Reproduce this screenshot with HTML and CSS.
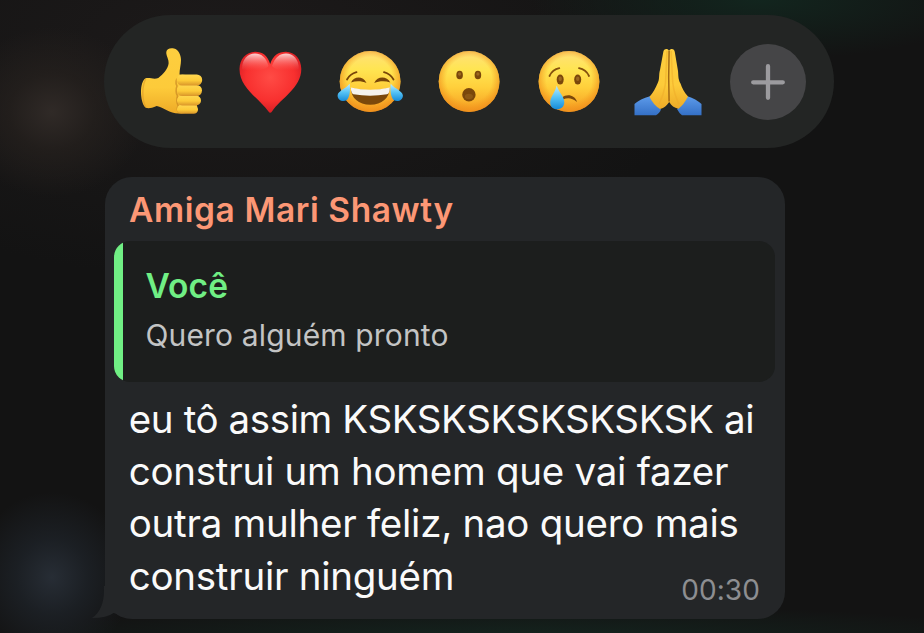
FILE: index.html
```html
<!DOCTYPE html>
<html lang="pt-BR">
<head>
<meta charset="utf-8">
<title>Reagir à mensagem</title>
<link rel="stylesheet" href="styles.css">
</head>
<body>
<svg class="defs" width="0" height="0" aria-hidden="true">
  <defs>
    <linearGradient id="face" x1="0" y1="0" x2="0" y2="1"><stop offset="0" stop-color="#ffe07a"/><stop offset=".3" stop-color="#ffe552"/><stop offset=".6" stop-color="#ffcf3b"/><stop offset="1" stop-color="#f59b20"/></linearGradient>
    <radialGradient id="rim" cx=".5" cy=".47" r=".53"><stop offset=".7" stop-color="#f4961c" stop-opacity="0"/><stop offset="1" stop-color="#ee8d1c" stop-opacity=".8"/></radialGradient>
    <linearGradient id="skin" x1="0" y1="0" x2="0" y2="1"><stop offset="0" stop-color="#fdce3f"/><stop offset=".6" stop-color="#fdcb3a"/><stop offset="1" stop-color="#eeaa27"/></linearGradient>
    <linearGradient id="finger" x1="0" y1="0" x2="0" y2="1"><stop offset="0" stop-color="#ffd750"/><stop offset=".55" stop-color="#fdca38"/><stop offset="1" stop-color="#d9952a"/></linearGradient>
    <radialGradient id="heart" cx=".5" cy=".42" r=".65"><stop offset="0" stop-color="#ff4b45"/><stop offset=".6" stop-color="#f8302f"/><stop offset="1" stop-color="#cb1720"/></radialGradient>
    <linearGradient id="shine" x1="0" y1="0" x2="0" y2="1"><stop offset="0" stop-color="#fff" stop-opacity=".8"/><stop offset="1" stop-color="#ff6a64" stop-opacity="0"/></linearGradient>
    <linearGradient id="tear" x1="0" y1="0" x2="0" y2="1"><stop offset="0" stop-color="#bcecff"/><stop offset=".5" stop-color="#55c2f5"/><stop offset="1" stop-color="#168bd8"/></linearGradient>
    <linearGradient id="sleeve" x1="0" y1="0" x2="0" y2="1"><stop offset="0" stop-color="#5d9bea"/><stop offset="1" stop-color="#3470c6"/></linearGradient>
  </defs>
</svg>
<main class="screen">
  <nav class="reactions">
    <svg class="emoji" viewBox="0 0 80 80">
      <path fill="url(#skin)" d="M35.300 10C35.500 7 39 5.600 43 6.500C47.500 7.500 50 13 50 18C50 23 48.500 27 48.500 32.500L66 34V70L48 71.500C38 71.500 33 65.500 25.700 64C20 66.500 17 66.500 14.700 65.700C11.500 63 10 56 10 50C10 44 11.500 38 14.700 36.300C19 35.300 23 38 27.300 36C32 32.500 37 27 37.600 21.500C38 17 35 14 35.300 10Z"/>
      <path d="M47 36Q43.500 39 46 44Q44 49 46.500 54Q45 59 47 63.500Q45.500 68 48 71" fill="none" stroke="#c98722" stroke-width="1.600" opacity=".7"/>
      <g fill="url(#finger)"><rect x="46" y="63" width="21" height="8.700" rx="4.300"/><rect x="46" y="53.500" width="24" height="10" rx="5"/><rect x="46" y="43" width="25" height="11" rx="5.400"/><rect x="45.700" y="32.500" width="25.500" height="11" rx="5.400"/></g>
      <path d="M14.700 37C10.800 44 10.800 58 14.700 65" fill="none" stroke="#dc9b27" stroke-width="1.500" opacity=".6"/>
    </svg>
    <svg class="emoji" viewBox="0 0 80 80">
      <path fill="url(#heart)" d="M40.200 22C43 13 49 9.600 56 9.700C65 9.900 71.300 17 71.300 27C71.300 46 51 56 42 69.500Q40.200 72 38.500 69.500C29 56 9.500 46 9.500 27C9.500 17 16 9.900 25 9.700C32 9.600 37.500 13 40.200 22Z"/>
      <path fill="url(#shine)" d="M12 27C12 17 18 11.500 25 11.500C31 11.500 36 15 38.500 24C36 29 16 30 12 27Z"/>
      <path fill="url(#shine)" d="M68.800 27C68.800 17 63 11.500 56 11.500C50 11.500 45 15 42 24C44 29 64 30 68.800 27Z"/>
    </svg>
    <svg class="emoji" viewBox="0 0 80 80">
      <circle cx="40.100" cy="39.500" r="30.400" fill="url(#face)"/><circle cx="40.100" cy="39.500" r="30.400" fill="url(#rim)"/>
      <g fill="none" stroke="#784509" stroke-width="1.800" stroke-linecap="round"><path d="M17 37.500Q20 32 26.500 30.200M54 30.200Q60.500 32 63.500 37.500"/></g>
      <path fill="#784509" d="M21 40.500C24 34 33 33.500 36.500 41C32 39 26 38.500 21 40.500ZM44.200 41C47.500 33.500 57 34 60.300 40.500C55 38.500 49 39 44.200 41Z"/>
      <path fill="#7b480b" d="M20.800 46Q40 50.500 59.800 46C59.500 56 52 62.700 40.300 62.700C28.500 62.700 21 56 20.800 46Z"/>
      <path fill="#f6f3ee" d="M20.800 45.500Q40 50 59.800 45.500C59.800 50 58.500 52 57 52.300Q40 55 23.500 52.300C22 52 20.800 49 20.800 45.500Z"/>
      <path fill="url(#tear)" d="M19.700 41.800C20.500 47 20 55.500 16.500 58.300C12.500 60.500 7.500 58 7.600 53.500C7.800 49 15.500 47 19.700 41.800Z"/>
      <path fill="url(#tear)" d="M60.700 41.800C60 47 60.500 55.500 64 58.300C68 60.500 73 58 72.900 53.500C72.500 49 65 47 60.700 41.800Z"/>
    </svg>
    <svg class="emoji" viewBox="0 0 80 80">
      <circle cx="40.100" cy="39.500" r="30.400" fill="url(#face)"/><circle cx="40.100" cy="39.500" r="30.400" fill="url(#rim)"/>
      <g fill="#7a470b"><ellipse cx="30.600" cy="33" rx="3.300" ry="4.300"/><ellipse cx="48.900" cy="33" rx="3.300" ry="4.300"/><circle cx="39.900" cy="52.700" r="6.700"/></g>
      <g fill="#9c6820"><ellipse cx="30.600" cy="32" rx="1.600" ry="1.800"/><ellipse cx="48.900" cy="32" rx="1.600" ry="1.800"/><ellipse cx="39.900" cy="54.500" rx="4" ry="2.700" opacity=".5"/></g>
    </svg>
    <svg class="emoji" viewBox="0 0 80 80">
      <circle cx="40" cy="39.500" r="30.400" fill="url(#face)"/><circle cx="40" cy="39.500" r="30.400" fill="url(#rim)"/>
      <g fill="#7a470b"><ellipse cx="31.200" cy="37.600" rx="3.500" ry="5"/><ellipse cx="48.700" cy="37.600" rx="3.500" ry="5"/><path d="M33 55.500C38 51.500 46 53 48 60C43 56 39 55.500 34 57.500Z"/></g>
      <g fill="#9c6820"><ellipse cx="31.200" cy="36.800" rx="1.700" ry="2.300"/><ellipse cx="48.700" cy="36.800" rx="1.700" ry="2.300"/></g>
      <path fill="none" stroke="#84500d" stroke-width="1.800" stroke-linecap="round" d="M20.500 34Q23.500 27.500 30.300 26.200M50 26.200Q57 27.500 60 34"/>
      <path fill="url(#tear)" d="M27.700 43.500C29.500 50 35.500 54.500 35.300 60.500C35 65 32 67.300 28 67.300C24 67.300 21.200 64.500 21.200 60.500C21.200 54.500 26.500 50 27.700 43.500Z"/>
    </svg>
    <svg class="emoji" viewBox="0 0 80 80">
      <path fill="url(#sleeve)" d="M6.500 62Q12 57 22 54.200Q25 62 33 67Q32 71 28 73.300H6.500ZM73.500 62Q68 57 59.500 54.200Q56 62 49 67Q51 71 54 73.300H73.500Z"/>
      <path fill="url(#skin)" d="M35.300 10C35.500 6.500 40 6 41 9C42.500 6 46.500 6.500 46.800 10L50 29C50.500 34 50 37 52.500 41.500C54 46 56 50 60 54.500Q56 62.500 50.500 66.700C46 66 43.500 63.500 41.200 60C38.500 63.500 36.500 66 32 67Q25 62.500 21.500 54.700C25 51 27.500 46 29.500 41.500C32 37 30.500 33 32 28Z"/>
      <path d="M41.100 9Q40.300 35 41.100 59.500" fill="none" stroke="#a26915" stroke-width="1.500"/>
      <path d="M39 9Q38 30 37.500 41Q36 52 31 62M43.200 9Q44 30 44.800 41Q46 52 51 62" fill="none" stroke="#eda927" stroke-width="1.500" opacity=".5"/>
    </svg>
    <button class="more" aria-label="Mais">
      <svg class="plus" viewBox="0 0 34 36"><path d="M17 2.200V33.800M2.200 18.300H31.800" fill="none" stroke="#9c9b9f" stroke-width="4.300" stroke-linecap="round"/></svg>
    </button>
  </nav>
  <article class="bubble">
    <svg class="tail" viewBox="0 0 36 34"><path d="M13 0H36V29Q34 30 31 30.800C27 30 25 27 22.500 27Q16 32 1 32Q13 24 13 4Z"/></svg>
    <h1 class="sender">Amiga Mari Shawty</h1>
    <blockquote class="quote">
      <div class="quote-bar"></div>
      <div class="quote-body">
        <p class="quote-name">Você</p>
        <p class="quote-text">Quero alguém pronto</p>
      </div>
    </blockquote>
    <p class="message"><span class="line-caps">eu tô assim KSKSKSKSKSKSKSK ai</span> <span>construi um homem que vai fazer</span> <span>outra mulher feliz, nao quero mais</span> <span>construir ninguém</span></p>
    <time class="time">00:30</time>
  </article>
</main>
</body>
</html>
```
FILE: styles.css
```css
* { box-sizing: border-box; margin: 0; padding: 0; }
body { background: #121212; font-family: Inter, "Liberation Sans", sans-serif; }
.defs { display: block; }
.screen {
  height: 633px;
  overflow: hidden;
  padding: 15px 0 0 104px;
  background:
    radial-gradient(ellipse 95px 85px at 52px 112px, #302a27 0, rgba(38,33,30,.7) 45%, transparent 100%),
    radial-gradient(ellipse 80px 85px at 52px 577px, #272d35 0, rgba(30,35,41,.75) 45%, transparent 100%),
    radial-gradient(ellipse 230px 60px at 760px 0, #12251e 0, transparent 100%),
    radial-gradient(ellipse 520px 36px at 520px 640px, #14251f 0, transparent 100%),
    radial-gradient(ellipse 480px 230px at 230px 50px, #1d1a1a 0, transparent 100%),
    #131313;
}
.reactions {
  width: 730px;
  height: 133px;
  padding-left: 26.5px;
  display: flex;
  align-items: center;
  gap: 19.6px;
  border-radius: 67px;
  background: #232524;
}
.emoji { width: 80px; height: 80px; flex: none; }
.more {
  width: 76px;
  height: 76px;
  margin-left: 2px;
  display: flex;
  align-items: center;
  justify-content: center;
  border: 0;
  border-radius: 50%;
  background: #454547;
}
.plus { width: 34px; height: 36px; }
.bubble {
  position: relative;
  width: 680px;
  height: 442px;
  margin: 29px 0 0 1px;
  padding-top: 13px;
  border-radius: 27px;
  background: #242628;
}
.tail { position: absolute; left: -14px; bottom: -1px; width: 36px; height: 34px; fill: #242628; }
.sender {
  padding-left: 24px;
  font-size: 33.5px;
  line-height: 40px;
  font-weight: 600;
  letter-spacing: 0.58px;
  color: #fc9775;
  white-space: nowrap;
}
.quote {
  display: flex;
  width: 661px;
  height: 141px;
  margin: 11px 0 0 9px;
  overflow: hidden;
  border-radius: 16px;
  background: #1c1e1d;
}
.quote-bar { width: 9px; background: #70ef84; }
.quote-body { padding: 25px 0 0 22.5px; }
.quote-name { font-size: 33.5px; line-height: 40px; font-weight: 600; letter-spacing: 0.1px; color: #70ef84; }
.quote-text { margin-top: 10px; font-size: 30px; line-height: 38px; letter-spacing: 0.15px; color: #c3c4c4; }
.message {
  padding: 11px 0 0 23.8px;
  font-size: 38.5px;
  line-height: 52.2px;
  letter-spacing: -0.27px;
  color: #fafafa;
  white-space: nowrap;
}
.message span { display: block; }
.message .line-caps { letter-spacing: -0.4px; }
.time { position: absolute; right: 25px; bottom: 12px; font-size: 28px; line-height: 34px; letter-spacing: 0.1px; color: #8d8e91; }
```
